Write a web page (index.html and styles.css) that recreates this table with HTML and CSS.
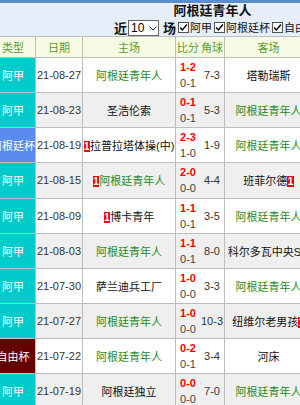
FILE: index.html
```html
<!DOCTYPE html>
<html lang="zh">
<head>
<meta charset="utf-8">
<link rel="stylesheet" href="styles.css">
</head>
<body>
<div class="page">
  <div class="topbar"></div>
  <div class="head">
    <div class="title">阿根廷青年人</div>
    <div class="filters">
      <span class="big">近</span>
      <span class="sel"><select><option>10</option></select><svg class="arr" viewBox="0 0 8 5"><path d="M0.5 0.5 L4 4.2 L7.5 0.5" fill="none" stroke="#222" stroke-width="1"/></svg></span>
      <span class="big">场</span>
      <label class="cb"><svg viewBox="0 0 12 12"><rect x="0.5" y="0.5" width="11" height="11" fill="#fff" stroke="#444"/><path d="M2.3 6 L4.8 8.6 L9.7 2.8" fill="none" stroke="#000" stroke-width="1.6"/></svg>阿甲</label>
      <label class="cb"><svg viewBox="0 0 12 12"><rect x="0.5" y="0.5" width="11" height="11" fill="#fff" stroke="#444"/><path d="M2.3 6 L4.8 8.6 L9.7 2.8" fill="none" stroke="#000" stroke-width="1.6"/></svg>阿根廷杯</label>
      <label class="cb"><svg viewBox="0 0 12 12"><rect x="0.5" y="0.5" width="11" height="11" fill="#fff" stroke="#444"/><path d="M2.3 6 L4.8 8.6 L9.7 2.8" fill="none" stroke="#000" stroke-width="1.6"/></svg>自由杯</label>
    </div>
  </div>
  <table class="grid">
    <colgroup>
      <col class="c-type"><col class="c-date"><col class="c-home"><col class="c-sc"><col class="c-cn"><col class="c-away">
    </colgroup>
    <thead>
      <tr><th>类型</th><th>日期</th><th>主场</th><th class="sc">比分</th><th>角球</th><th>客场</th></tr>
    </thead>
    <tbody>
      <tr><td class="t aj">阿甲</td><td class="d">21-08-27</td><td class="g">阿根廷青年人</td><td class="sc"><div class="ft">1-2</div><div class="ht">0-1</div></td><td class="cn">7-3</td><td>塔勒瑞斯</td></tr>
      <tr class="alt"><td class="t aj">阿甲</td><td class="d">21-08-23</td><td>圣浩伦索</td><td class="sc"><div class="ft">0-1</div><div class="ht">0-1</div></td><td class="cn">5-3</td><td class="g">阿根廷青年人</td></tr>
      <tr><td class="t ab">阿根廷杯</td><td class="d">21-08-19</td><td><span class="rk">1</span>拉普拉塔体操(中)</td><td class="sc"><div class="ft">2-3</div><div class="ht">1-0</div></td><td class="cn">1-9</td><td class="g">阿根廷青年人</td></tr>
      <tr class="alt"><td class="t aj">阿甲</td><td class="d">21-08-15</td><td class="g"><span class="rk">1</span>阿根廷青年人</td><td class="sc"><div class="ft">2-0</div><div class="ht">0-0</div></td><td class="cn">4-4</td><td>班菲尔德<span class="rk">1</span></td></tr>
      <tr><td class="t aj">阿甲</td><td class="d">21-08-09</td><td><span class="rk">1</span>博卡青年</td><td class="sc"><div class="ft">1-1</div><div class="ht">0-1</div></td><td class="cn">3-5</td><td class="g">阿根廷青年人</td></tr>
      <tr class="alt"><td class="t aj">阿甲</td><td class="d">21-08-03</td><td class="g">阿根廷青年人</td><td class="sc"><div class="ft">1-1</div><div class="ht">0-1</div></td><td class="cn">8-0</td><td>科尔多瓦中央SD</td></tr>
      <tr><td class="t aj">阿甲</td><td class="d">21-07-30</td><td>萨兰迪兵工厂</td><td class="sc"><div class="ft">1-0</div><div class="ht">0-0</div></td><td class="cn">3-3</td><td class="g">阿根廷青年人</td></tr>
      <tr class="alt"><td class="t aj">阿甲</td><td class="d">21-07-27</td><td class="g">阿根廷青年人</td><td class="sc"><div class="ft">1-0</div><div class="ht">0-0</div></td><td class="cn">10-3</td><td>纽维尔老男孩<span class="rk">1</span></td></tr>
      <tr><td class="t zy">自由杯</td><td class="d">21-07-22</td><td class="g">阿根廷青年人</td><td class="sc"><div class="ft">0-2</div><div class="ht">0-1</div></td><td class="cn">3-4</td><td>河床</td></tr>
      <tr class="alt"><td class="t aj">阿甲</td><td class="d">21-07-19</td><td>阿根廷独立</td><td class="sc"><div class="ft">0-0</div><div class="ht">0-0</div></td><td class="cn">7-0</td><td class="g">阿根廷青年人</td></tr>
    </tbody>
  </table>
</div>
</body>
</html>
```

FILE: styles.css
```css
html, body {
  margin: 0;
  padding: 0;
  overflow: hidden;
  background: #fff;
}
body {
  width: 300px;
  height: 405px;
  font-family: "Liberation Sans", "Noto Sans CJK SC", sans-serif;
  font-size: 11px;
  color: #000;
}
.page {
  width: 443px;
  margin-left: -9px;
}
.topbar {
  height: 3px;
  background: #5b8fcb;
}
.head {
  background: #e6eef9;
  text-align: center;
}
.title {
  font-size: 13px;
  font-weight: bold;
  line-height: 15px;
  height: 15px;
  color: #111;
}
.filters {
  display: flex;
  justify-content: flex-start;
  align-items: center;
  height: 18px;
  padding-left: 123px;
  color: #111;
}
.big {
  font-size: 13px;
  font-weight: bold;
}
.sel {
  display: inline-flex;
  align-items: center;
  box-sizing: border-box;
  width: 31px;
  height: 16px;
  margin: 2px 4px 0 1px;
  border: 1px solid #666;
  background: #fff;
}
.sel select {
  appearance: none;
  -webkit-appearance: none;
  border: 0;
  margin: 0;
  padding: 0 0 0 2px;
  width: 20px;
  background: transparent;
  font-family: inherit;
  font-size: 12px;
  color: #000;
  outline: none;
}
.arr {
  width: 8px;
  height: 5px;
}
.cb {
  display: inline-flex;
  align-items: center;
  margin-left: 2px;
}
.cb svg {
  width: 11px;
  height: 11px;
  margin-right: 1px;
}
.grid {
  border-collapse: separate;
  border-spacing: 0;
  table-layout: fixed;
  width: 322px;
  border-top: 1px solid #bdbdbd;
}
.c-type { width: 45px; }
.c-date { width: 47px; }
.c-home { width: 93px; }
.c-sc { width: 24px; }
.c-cn { width: 25px; }
.c-away { width: 88px; }
.grid th,
.grid td {
  box-sizing: border-box;
  padding: 0;
  border-right: 1px solid #bdbdbd;
  border-bottom: 1px solid #bdbdbd;
  text-align: center;
  white-space: nowrap;
  overflow: hidden;
}
.grid th {
  height: 21px;
  background: #f6fbe6;
  color: #5f9a2f;
  font-weight: normal;
  font-size: 11px;
}
.grid th.sc,
.grid td.sc {
  border-right: 0;
}
.grid td {
  height: 35.125px;
  color: #111;
}
.grid tr.alt td {
  background: #efefef;
}
.grid td.t {
  color: #fff;
}
.grid tr td.aj { background: #00cbcb; }
.grid tr td.ab { background: #5a8cf0; }
.grid tr td.zy { background: #660000; }
.grid td.d {
  color: #333;
}
.grid td.g {
  color: #1e8b1e;
}
.sc div {
  line-height: 16px;
}
.sc .ft {
  color: #f00;
  font-weight: bold;
}
.sc .ht {
  color: #444;
}
.grid td.cn {
  color: #333;
}
.rk {
  display: inline-block;
  background: #f00;
  color: #fff;
  font-weight: bold;
  font-size: 10px;
  line-height: 11px;
  padding: 0 0.5px;
  vertical-align: 0;
}
```
